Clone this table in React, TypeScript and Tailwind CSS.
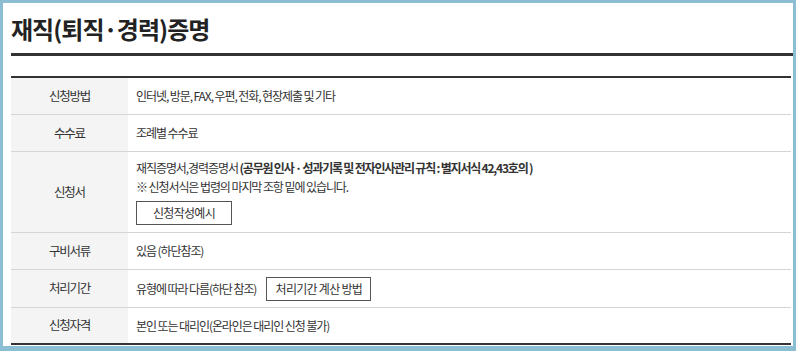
import React from 'react';

const font = { fontFamily: '"Noto Sans CJK KR", "Noto Sans", sans-serif' };

interface RowProps {
    label: string;
    children: React.ReactNode;
    className?: string;
    bodyClassName?: string;
}

const Row: React.FC<RowProps> = ({ label, children, className = 'h-[37px] border-b border-[#d5d5d5]', bodyClassName = 'justify-center' }) => (
    <div className={`flex ${className}`}>
        <div className="w-[117px] shrink-0 bg-[#f4f4f4] flex items-center justify-center text-[12.5px] text-[#333] tracking-[-0.1em]">
            {label}
        </div>
        <div className={`flex-1 flex flex-col pl-[8px] text-[12px] text-[#333] tracking-[-0.09em] ${bodyClassName}`}>
            {children}
        </div>
    </div>
);

const OutlineButton: React.FC<{ children: React.ReactNode; className?: string }> = ({ children, className = '' }) => (
    <button
        type="button"
        className={`h-[24px] border border-[#555] bg-white text-[12px] text-[#333] tracking-[-0.06em] flex items-center justify-center ${className}`}
    >
        {children}
    </button>
);

export default function App() {
    return (
        <div className="w-[796px] h-[351px] bg-[#8bbdd3] pt-[3px] pl-[3px] pr-[3px] pb-[5px]" style={font}>
            <div className="h-full bg-white pl-[8px]">
                <h2 className="h-[50px] pt-[8px] text-[24px] font-bold text-[#222] tracking-[-0.04em] leading-[36px]">
                    재직(퇴직·경력)증명
                </h2>
                <div className="h-[3px] bg-[#333]" />
                <div className="h-[20px]" />
                <div className="mr-[2px] border-t-2 border-[#333]">
                    <Row label="신청방법">인터넷, 방문, FAX, 우편, 전화, 현장제출 및 기타</Row>
                    <Row label="수수료">조례별 수수료</Row>
                    <Row label="신청서" className="h-[81px] border-b border-[#d5d5d5]" bodyClassName="pt-[6px]">
                        <p className="leading-[19px]">
                            재직증명서,경력증명서 <span className="font-bold tracking-[-0.1em]">(공무원 인사 · 성과기록 및 전자인사관리 규칙 : 별지서식 42,43호의 )</span>
                        </p>
                        <p className="leading-[19px]">※ 신청서식은 법령의 마지막 조항 밑에 있습니다.</p>
                        <OutlineButton className="w-[96px] mt-[5px]">신청작성예시</OutlineButton>
                    </Row>
                    <Row label="구비서류">있음 (하단참조)</Row>
                    <Row label="처리기간" className="h-[38px] border-b border-[#d5d5d5]">
                        <div className="flex items-center gap-[10px]">
                            <span>유형에 따라 다름(하단 참조)</span>
                            <OutlineButton className="w-[105px]">처리기간 계산 방법</OutlineButton>
                        </div>
                    </Row>
                    <Row label="신청자격" className="h-[37px] border-b-2 border-[#333]">
                        본인 또는 대리인(온라인은 대리인 신청 불가)
                    </Row>
                </div>
            </div>
        </div>
    );
}
